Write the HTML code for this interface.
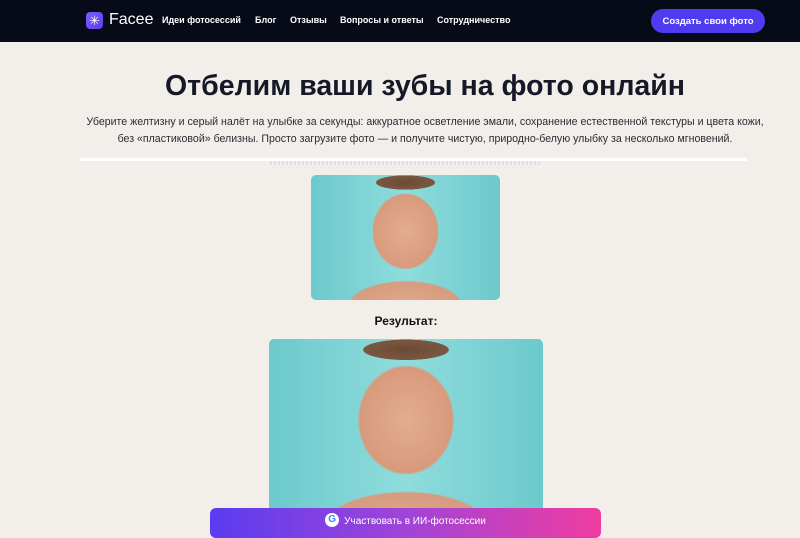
<!DOCTYPE html>
<html><head><meta charset="utf-8"><style>
*{margin:0;padding:0;box-sizing:border-box}
body{width:800px;height:533px;overflow:hidden;background:#f2eee9;font-family:"Liberation Sans",sans-serif;position:relative}
.hdr{position:absolute;left:0;top:0;width:800px;height:42px;background:#070a17;}
.logo{position:absolute;left:86px;top:12px;width:17px;height:17px;border-radius:4px;background:linear-gradient(135deg,#7c5cff,#5b3ef0);color:#fff;font-size:13px;line-height:17px;text-align:center}
.brand{position:absolute;left:109px;top:11px;color:#fff;font-size:16px}
.nav{position:absolute;top:15px;color:#fff;font-size:9px;font-weight:bold;white-space:nowrap}
.cta{position:absolute;left:651px;top:9px;width:114px;height:24px;border-radius:12px;background:#4f3cf0;color:#fff;font-size:9.5px;font-weight:bold;display:flex;align-items:center;justify-content:center}
h1{position:absolute;top:70px;left:50px;width:750px;text-align:center;font-size:28.5px;color:#151826;font-weight:bold}
.sub{position:absolute;top:114px;left:70px;width:710px;text-align:center;font-size:10.6px;line-height:17px;color:#2a2c36}
.line{position:absolute;left:80px;top:158px;width:667px;height:3px;background:#fff}
.sh{position:absolute;left:270px;top:161px;width:270px;height:4px;background:repeating-linear-gradient(90deg,#ddd 0 2px,#eee 2px 4px);opacity:.8}
.ph{position:absolute;overflow:hidden;border-radius:5px;background:radial-gradient(ellipse 22% 8% at 50% 6%,#6b4a35 0,#7a5740 70%,transparent 72%),radial-gradient(ellipse 26% 45% at 50% 45%,#e2ad90 0,#d99a7c 65%,transparent 68%),radial-gradient(ellipse 45% 30% at 50% 105%,#dfa88c 0,#d69c80 65%,transparent 68%),linear-gradient(90deg,#6cc9cc,#8fdcdc 50%,#6cc9cc)}
.res{position:absolute;top:314px;width:812px;text-align:center;font-size:12px;font-weight:bold;color:#111}
.btn{position:absolute;left:210px;top:508px;width:391px;height:30px;border-radius:6px;background:linear-gradient(90deg,#5a3cf0,#a044d8 50%,#f03ca0);color:#fff;font-size:10px;text-align:center;line-height:28px}
.g{display:inline-block;width:14px;height:14px;border-radius:50%;background:#fff;color:#4285f4;font-weight:bold;font-size:10px;line-height:14px;vertical-align:middle;margin-right:5px;margin-top:-2px}
</style></head><body>
<div class="hdr">
<div class="logo">✳</div><div class="brand">Facee</div>
<div class="nav" style="left:162px">Идеи фотосессий</div>
<div class="nav" style="left:255px">Блог</div>
<div class="nav" style="left:290px">Отзывы</div>
<div class="nav" style="left:340px">Вопросы и ответы</div>
<div class="nav" style="left:437px">Сотрудничество</div>
<div class="cta">Создать свои фото</div>
</div>
<h1>Отбелим ваши зубы на фото онлайн</h1>
<div class="sub">Уберите желтизну и серый налёт на улыбке за секунды: аккуратное осветление эмали, сохранение естественной текстуры и цвета кожи,<br>без «пластиковой» белизны. Просто загрузите фото — и получите чистую, природно-белую улыбку за несколько мгновений.</div>
<div class="line"></div><div class="sh"></div>
<div class="ph" style="left:311px;top:175px;width:189px;height:125px"></div>
<div class="res">Результат:</div>
<div class="ph" style="left:269px;top:339px;width:274px;height:180px"></div>
<div class="btn"><span class="g">G</span>Участвовать в ИИ-фотосессии</div>
</body></html>
